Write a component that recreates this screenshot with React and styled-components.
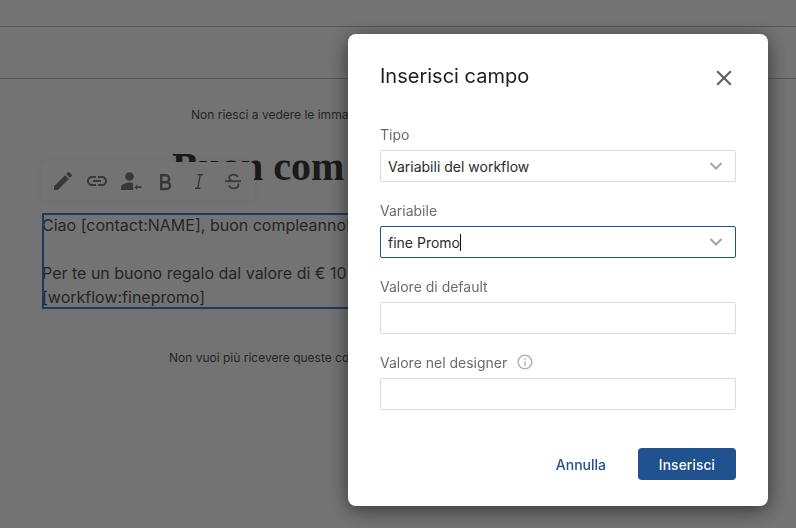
import React from "react";
import styled, { createGlobalStyle } from "styled-components";
import { MdEdit, MdLink, MdClose, MdInfoOutline } from "react-icons/md";

const GlobalStyle = createGlobalStyle`
  html, body {
    margin: 0;
    height: 100%;
    overflow: hidden;
    background: #fff;
    font-family: Inter, "Liberation Sans", sans-serif;
  }
  * { box-sizing: border-box; }
`;

function PersonArrow() {
  return (
    <svg width="24" height="24" viewBox="0 0 24 24" fill="currentColor">
      <circle cx="10.500" cy="7.500" r="4.300" />
      <path d="M2 21v-2.600c0-3 5.200-4.900 8.500-4.900 1.100 0 2.400.2 3.600.6V21z" />
      <path d="M15.400 18.200l2.800-2.700v1.800h4.300v1.800h-4.300v1.800z" />
    </svg>
  );
}

function BoldIcon() {
  return (
    <svg width="20" height="20" viewBox="0 0 20 20" fill="none" stroke="currentColor" strokeWidth="2.400">
      <path d="M6.200 4.200h4.500a3.500 3.500 0 0 1 0 7H6.200zM6.200 11.200h5.400a3.400 3.400 0 0 1 0 6.800H6.200z" />
    </svg>
  );
}

function ItalicIcon() {
  return (
    <svg width="20" height="20" viewBox="0 0 20 20" fill="none" stroke="currentColor" strokeWidth="1.400">
      <path d="M8.500 3.800H14M6 17.200h5.500M11.300 3.800L8.700 17.200" />
    </svg>
  );
}

function StrikeIcon() {
  return (
    <svg width="20" height="20" viewBox="0 0 20 20" fill="none" stroke="currentColor" strokeWidth="1.800">
      <path d="M14.800 6c-.6-1.600-2.300-2.400-4.300-2.400-2.500 0-4.300 1.200-4.300 3.100 0 1.300.8 2.200 2 2.800" />
      <path d="M15 12.500c.3.600.4 1 .4 1.500 0 2-1.800 3.300-4.700 3.300-2.400 0-4.200-1-4.800-2.800" />
      <path d="M2 10.200h16" />
    </svg>
  );
}

function Chevron() {
  return (
    <ChevronIcon width="14" height="10" viewBox="0 0 14 10">
      <path d="M1.500 2l5.500 5.500L12.500 2" fill="none" stroke="currentColor" strokeWidth="2" />
    </ChevronIcon>
  );
}

export default function App() {
  return (
    <>
      <GlobalStyle />
      <Page>
        <TopBar />
        <SubBar />
        <Content>
          {/* the rest of these lines sits behind the dialog */}
          <SmallNote $inset={149}>Non riesci a vedere le imma</SmallNote>
          <Heading>Buon com</Heading>
          <TextBlock>
            <Toolbar>
              <ToolIcon><MdEdit size={24} /></ToolIcon>
              <ToolIcon><MdLink size={24} /></ToolIcon>
              <ToolIcon><PersonArrow /></ToolIcon>
              <ToolIcon><BoldIcon /></ToolIcon>
              <ToolIcon><ItalicIcon /></ToolIcon>
              <ToolIcon><StrikeIcon /></ToolIcon>
            </Toolbar>
            Ciao [contact:NAME], buon compleanno!
            <br />
            <br />
            Per te un buono regalo dal valore di € 10
            <br />
            [workflow:finepromo]
          </TextBlock>
          <SmallNote $inset={127}>Non vuoi più ricevere queste co</SmallNote>
        </Content>
      </Page>
      <Backdrop>
        <Modal>
          <ModalHeader>
            <Title>Inserisci campo</Title>
            <CloseButton><MdClose size={26} /></CloseButton>
          </ModalHeader>
          <Field>
            <Label>Tipo</Label>
            <Control>
              Variabili del workflow
              <Chevron />
            </Control>
          </Field>
          <Field>
            <Label>Variabile</Label>
            <Control $focused>
              fine Promo<Caret />
              <Chevron />
            </Control>
          </Field>
          <Field>
            <Label>Valore di default</Label>
            <Control />
          </Field>
          <Field>
            <Label>
              Valore nel designer
              <InfoMark><MdInfoOutline size={18} /></InfoMark>
            </Label>
            <Control />
          </Field>
          <Actions>
            <GhostButton>Annulla</GhostButton>
            <PrimaryButton>Inserisci</PrimaryButton>
          </Actions>
        </Modal>
      </Backdrop>
    </>
  );
}

const Page = styled.div`
  height: 528px;
  background: #fff;
`;

const TopBar = styled.div`
  height: 27px;
  border-bottom: 1px solid #c4c4c4;
`;

const SubBar = styled.div`
  height: 52px;
  border-bottom: 1px solid #c4c4c4;
`;

const Content = styled.div`
  padding: 28px 0 0 42px;
`;

const SmallNote = styled.div`
  padding-left: ${(p) => p.$inset}px;
  font-size: 12px;
  line-height: 16px;
  white-space: nowrap;
  color: #555;
`;

const Heading = styled.h1`
  margin: 22px 0 24px;
  padding-left: 130px;
  font-family: "Liberation Serif", serif;
  font-size: 40px;
  line-height: 44px;
  font-weight: 700;
  white-space: nowrap;
  color: #3a3a3a;
`;

const TextBlock = styled.div`
  position: relative;
  height: 96px;
  width: 712px;
  margin-bottom: 41px;
  outline: 2px solid #4581d5;
  outline-offset: -2px;
  font-size: 16px;
  line-height: 24px;
  color: #555;
  white-space: nowrap;
`;

const Toolbar = styled.div`
  position: absolute;
  left: 0;
  top: -51px;
  width: 212px;
  height: 38px;
  padding: 0 6px;
  display: flex;
  align-items: center;
  justify-content: space-between;
  background: #fff;
  border-radius: 4px;
  color: #7c7c7c;
  box-shadow: 0 0 8px rgba(0, 0, 0, 0.08);
`;

const ToolIcon = styled.span`
  width: 30px;
  display: flex;
  align-items: center;
  justify-content: center;
`;

const Backdrop = styled.div`
  position: fixed;
  inset: 0;
  background: rgba(0, 0, 0, 0.55);
  display: flex;
  justify-content: flex-end;
  align-items: flex-start;
  padding: 34px 28px 0 0;
`;

const Modal = styled.div`
  width: 420px;
  height: 472px;
  padding: 26px 32px 0;
  background: #fff;
  border-radius: 8px;
  box-shadow: 0 4px 20px rgba(0, 0, 0, 0.55);
  display: flex;
  flex-direction: column;
`;

const ModalHeader = styled.div`
  display: flex;
  justify-content: space-between;
  align-items: center;
  height: 32px;
  margin-bottom: 26px;
`;

const Title = styled.h2`
  margin: 0;
  font-size: 20px;
  line-height: 32px;
  font-weight: 400;
  color: #1d1d1f;
`;

const CloseButton = styled.span`
  display: flex;
  margin-right: -1px;
  margin-top: 4px;
  color: #5f6165;
`;

const Field = styled.div`
  margin-bottom: 12px;
`;

const Label = styled.div`
  display: flex;
  align-items: center;
  height: 20px;
  margin-top: 6px;
  margin-bottom: 6px;
  font-size: 14px;
  color: #6b6b6b;
`;

const InfoMark = styled.span`
  display: flex;
  margin-left: 9px;
  color: #b4b4b4;
`;

const Control = styled.div`
  position: relative;
  display: flex;
  align-items: center;
  height: 32px;
  padding: 0 7px;
  border: 1px solid ${(p) => (p.$focused ? "#20528f" : "#dcdcdc")};
  border-radius: 2px;
  font-size: 14px;
  color: #2b2b2b;
  background: #fff;
`;

const Caret = styled.span`
  display: inline-block;
  width: 1px;
  height: 17px;
  background: #111;
`;

const ChevronIcon = styled.svg`
  position: absolute;
  right: 12px;
  top: 10px;
  color: #aaa39d;
`;

const Actions = styled.div`
  display: flex;
  justify-content: flex-end;
  align-items: center;
  gap: 32px;
  margin-top: 26px;
`;

const GhostButton = styled.span`
  font-size: 14px;
  font-weight: 500;
  color: #20528f;
`;

const PrimaryButton = styled.span`
  display: flex;
  align-items: center;
  justify-content: center;
  width: 98px;
  height: 32px;
  border-radius: 4px;
  background: #20528f;
  color: #fff;
  font-size: 14px;
  font-weight: 500;
`;
